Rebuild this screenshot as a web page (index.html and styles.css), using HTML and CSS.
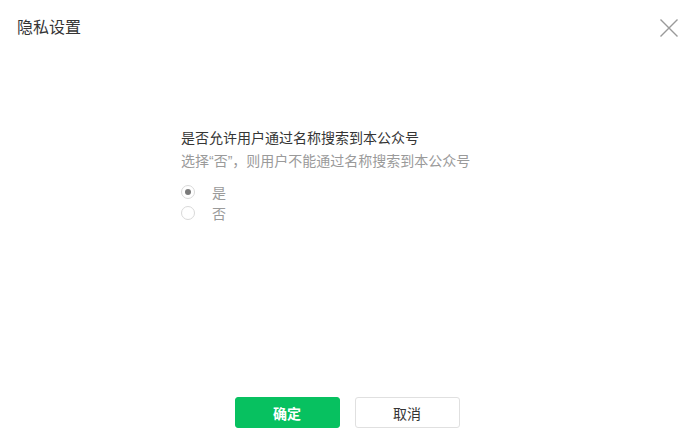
FILE: index.html
```html
<!DOCTYPE html>
<html lang="zh-CN">
<head>
  <meta charset="UTF-8">
  <meta name="viewport" content="width=device-width, initial-scale=1.0">
  <title>隐私设置</title>
  <link rel="stylesheet" href="styles.css">
</head>
<body>
  <div class="dialog">
    <div class="dialog-hd">
      <h3 class="dialog-title">隐私设置</h3>
      <button type="button" class="dialog-close" aria-label="关闭">
        <svg width="18" height="18" viewBox="0 0 18 18">
          <path d="M0.5 0.5L17.5 17.5M17.5 0.5L0.5 17.5" stroke="#9a9a9a" stroke-width="1.4" fill="none"/>
        </svg>
      </button>
    </div>

    <div class="dialog-bd">
      <p class="setting-title">是否允许用户通过名称搜索到本公众号</p>
      <p class="setting-tips">选择“否”，则用户不能通过名称搜索到本公众号</p>
      <label class="radio-item">
        <input type="radio" name="search" checked>
        <span class="radio-icon"></span>
        <span class="radio-label">是</span>
      </label>
      <label class="radio-item">
        <input type="radio" name="search">
        <span class="radio-icon"></span>
        <span class="radio-label">否</span>
      </label>
    </div>

    <div class="dialog-ft">
      <button type="button" class="btn btn-primary">确定</button>
      <button type="button" class="btn btn-default">取消</button>
    </div>
  </div>
</body>
</html>
```

FILE: styles.css
```css
html, body {
  margin: 0;
  padding: 0;
  height: 100%;
  background: #fff;
}
body {
  font-family: "Liberation Sans", "Noto Sans CJK SC", sans-serif;
  color: #353535;
}
.dialog {
  height: 100%;
  display: flex;
  flex-direction: column;
}
.dialog-hd {
  display: flex;
  justify-content: space-between;
  align-items: flex-start;
  padding: 16px 11px 0 17px;
}
.dialog-title {
  margin: 0;
  font-size: 16px;
  font-weight: normal;
  line-height: 24px;
}
.dialog-close {
  border: none;
  background: none;
  padding: 0;
  margin-top: 3px;
  width: 18px;
  height: 18px;
  cursor: pointer;
}
.dialog-close svg {
  display: block;
}
.dialog-bd {
  flex: 1;
  padding: 88px 0 0 181px;
}
.setting-title {
  margin: 0;
  font-size: 14px;
  line-height: 20px;
}
.setting-tips {
  margin: 3px 0 10px;
  font-size: 14px;
  line-height: 20px;
  color: #9a9a9a;
}
.radio-item {
  display: flex;
  align-items: center;
  height: 21px;
  font-size: 14px;
  color: #9a9a9a;
  cursor: pointer;
}
.radio-item input {
  display: none;
}
.radio-icon {
  width: 12px;
  height: 12px;
  border: 1px solid #d9d9d9;
  border-radius: 50%;
  margin-right: 17px;
  position: relative;
  background: #fff;
}
.radio-item input:checked + .radio-icon::after {
  content: "";
  position: absolute;
  left: 3px;
  top: 3px;
  width: 6px;
  height: 6px;
  border-radius: 50%;
  background: #7a7a7a;
}
.dialog-ft {
  display: flex;
  justify-content: center;
  gap: 15px;
  padding: 0 0 20px 5px;
}
.btn {
  width: 105px;
  height: 31px;
  border-radius: 3px;
  font-family: inherit;
  font-size: 14px;
  cursor: pointer;
}
.btn-primary {
  background: #07c160;
  border: 1px solid #07c160;
  color: #fff;
  font-weight: bold;
}
.btn-default {
  background: #fff;
  border: 1px solid #e0e0e0;
  color: #353535;
}
```
